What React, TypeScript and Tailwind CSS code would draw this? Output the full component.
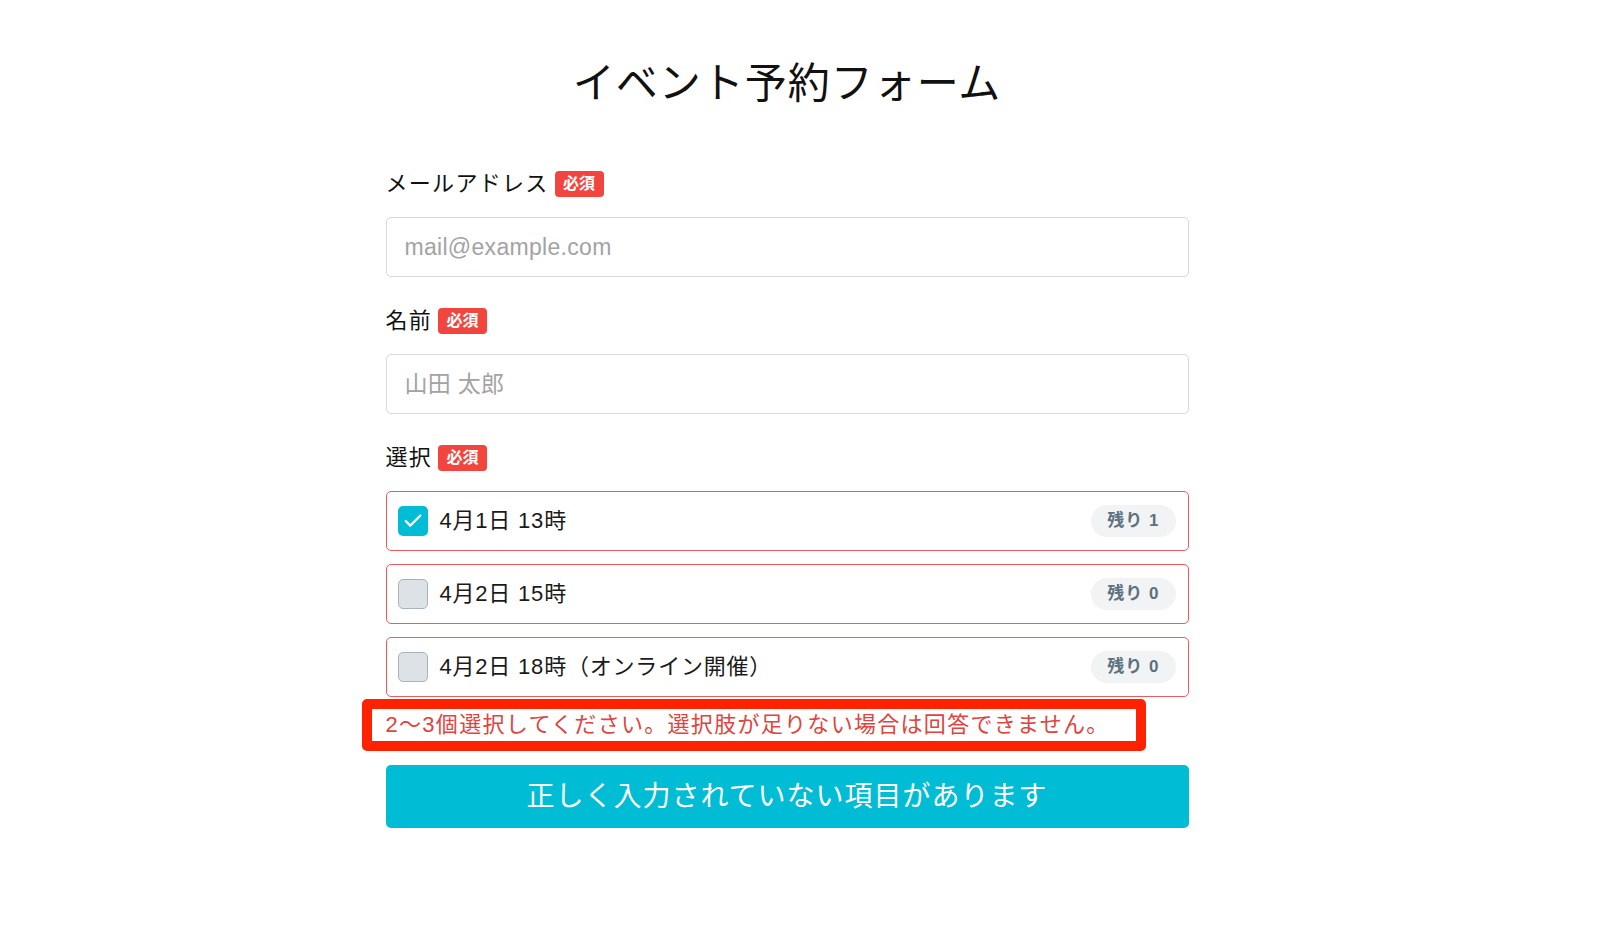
import { Check } from 'lucide-react';

const font = {
  fontFamily: '"Liberation Sans", "Noto Sans CJK JP", sans-serif',
};

const options = [
  { label: '4月1日 13時', remain: 1, checked: true },
  { label: '4月2日 15時', remain: 0, checked: false },
  { label: '4月2日 18時（オンライン開催）', remain: 0, checked: false },
];

function Required() {
  return (
    <span className="ml-[6px] flex h-[26px] w-[49px] items-center justify-center rounded-[4px] bg-[#f2453d] text-[16px] font-bold leading-none text-white">
      必須
    </span>
  );
}

function Label({ text }: { text: string }) {
  return (
    <div className="flex h-[30px] items-center">
      <span className="text-[22px] leading-none tracking-[1.3px] text-[#111]">{text}</span>
      <Required />
    </div>
  );
}

function TextField({ placeholder }: { placeholder: string }) {
  return (
    <input
      type="text"
      placeholder={placeholder}
      className="mt-[18px] block h-[60px] w-full rounded-[5px] border border-[#d9d9d9] bg-white px-[18px] text-[23px] tracking-[0.3px] text-[#222] outline-none placeholder:text-[#a3a3a3]"
    />
  );
}

export default function App() {
  return (
    <div className="min-h-screen bg-white" style={font}>
      <div className="flex justify-center pr-[26px]">
        <div className="w-[803px]">
          <h1 className="pt-[52px] text-center text-[42px] font-normal leading-[64px] tracking-[1px] text-[#111]">
            イベント予約フォーム
          </h1>

          <div className="mt-[53px]">
            <Label text="メールアドレス" />
            <TextField placeholder="mail@example.com" />
          </div>

          <div className="mt-[29px]">
            <Label text="名前" />
            <TextField placeholder="山田 太郎" />
          </div>

          <div className="mt-[29px]">
            <Label text="選択" />
            <div className="mt-[18px] flex flex-col gap-[13px]">
              {options.map((opt, i) => (
                <div
                  key={i}
                  className="flex h-[60px] items-center rounded-[5px] border border-[#ec5b5b] pl-[11px] pr-[12px]"
                >
                  {opt.checked ? (
                    <span className="flex h-[30px] w-[30px] items-center justify-center rounded-[5px] bg-[#00bcd4]">
                      <Check className="text-white" size={22} strokeWidth={2.5} />
                    </span>
                  ) : (
                    <span className="h-[30px] w-[30px] rounded-[5px] border-[1.5px] border-[#a9b3bc] bg-[#dde2e6]" />
                  )}
                  <span className="ml-[12px] text-[22px] leading-none tracking-[0.8px] text-[#1a1a1a]">{opt.label}</span>
                  <span className="ml-auto flex h-[32px] items-center rounded-full bg-[#f1f3f5] px-[16px] text-[17px] font-bold tracking-[1px] text-[#5d717f]">
                    残り {opt.remain}
                  </span>
                </div>
              ))}
            </div>
          </div>

          <div className="-ml-[24px] mt-[2px] flex h-[52px] w-[784px] items-center rounded-[5px] border-[10px] border-[#ff2200] pl-[14px]">
            <span className="text-[22px] leading-none tracking-[1.3px] text-[#e0443e]">
              2〜3個選択してください。選択肢が足りない場合は回答できません。
            </span>
          </div>

          <button className="mt-[14px] flex h-[63px] w-full items-center justify-center rounded-[5px] bg-[#00bcd4] text-[28px] tracking-[1px] text-white">
            正しく入力されていない項目があります
          </button>
        </div>
      </div>
    </div>
  );
}
